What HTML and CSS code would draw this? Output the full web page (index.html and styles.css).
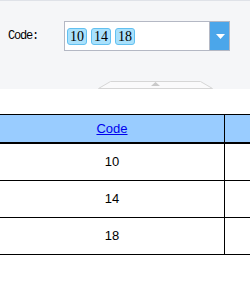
FILE: index.html
```html
<!DOCTYPE html>
<html>
<head>
<meta charset="utf-8">
<link rel="stylesheet" href="styles.css">
</head>
<body>
<div class="page">
  <div class="filter">
    <div class="filter-row">
      <span class="label">Code:</span>
      <div class="select">
        <div class="field">
          <span class="tag">10</span>
          <span class="tag">14</span>
          <span class="tag">18</span>
        </div>
        <div class="drop">
          <svg width="9" height="5" viewBox="0 0 9 5"><polygon points="0,0 9,0 4.5,5" fill="#ffffff"/></svg>
        </div>
      </div>
    </div>
    <div class="tab">
      <svg width="116" height="8" viewBox="0 0 116 8">
        <polygon points="0.5,7.5 12.5,0.5 102.5,0.5 114.5,7.5" fill="#fafafb" stroke="#d6d6d6" stroke-width="1"/>
        <polygon points="53,5 57.5,1 62,5" fill="#cacaca"/>
      </svg>
    </div>
  </div>
  <table class="grid">
    <colgroup><col class="c1"><col class="c2"></colgroup>
    <thead>
      <tr><th class="first"><a href="#">Code</a></th><th></th></tr>
    </thead>
    <tbody>
      <tr><td class="first">10</td><td></td></tr>
      <tr><td class="first">14</td><td></td></tr>
      <tr><td class="first">18</td><td></td></tr>
    </tbody>
  </table>
</div>
</body>
</html>
```
FILE: styles.css
```css
html, body {
  margin: 0;
  padding: 0;
  background: #ffffff;
  overflow: hidden;
}
.page {
  width: 250px;
  height: 286px;
  overflow: hidden;
}
.filter {
  box-sizing: border-box;
  height: 89px;
  border-top: 1px solid #dfe2e8;
  background: #f5f6f8;
  display: flex;
  flex-direction: column;
}
.filter-row {
  display: flex;
  align-items: center;
  margin-top: 20px;
  padding-left: 8px;
}
.label {
  font-family: "Liberation Mono", monospace;
  font-size: 12px;
  letter-spacing: -1.2px;
  color: #000;
  width: 56px;
}
.select {
  box-sizing: border-box;
  width: 166px;
  height: 30px;
  border: 1px solid #b4b8c4;
  display: flex;
  background: #fff;
}
.field {
  flex: 1;
  display: flex;
  align-items: center;
  gap: 4px;
  padding-left: 2px;
}
.tag {
  box-sizing: border-box;
  height: 17px;
  width: 20px;
  border: 1px solid #62c0f0;
  background: #a9e1fc;
  border-radius: 3px;
  font-family: "Liberation Serif", serif;
  font-size: 14px;
  line-height: 15px;
  text-align: center;
  color: #000;
}
.drop {
  width: 19px;
  border-left: 1px solid #b4b8c4;
  background: #4ba6ea;
  display: flex;
  align-items: center;
  justify-content: center;
}
.drop svg {
  display: block;
  margin-left: 1px;
}
.tab {
  margin-top: auto;
  margin-left: 98px;
  height: 8px;
}
.tab svg {
  display: block;
}
.grid {
  margin-top: 25px;
  border-collapse: separate;
  border-spacing: 0;
  table-layout: fixed;
  width: 325px;
  font-family: "Liberation Sans", Arial, sans-serif;
  font-size: 13px;
}
.c1 { width: 225px; }
.c2 { width: 100px; }
.grid th {
  background: #99ccff;
  border-top: 1px solid #000;
  border-bottom: 2px solid #000;
  padding: 0;
  height: 27px;
  line-height: 27px;
  font-weight: normal;
  text-align: center;
}
.grid th a {
  color: #0000ee;
  text-decoration: underline;
}
.grid td {
  border-bottom: 1px solid #000;
  padding: 0;
  height: 36px;
  line-height: 36px;
  text-align: center;
  color: #000;
}
.grid .first {
  border-right: 1px solid #000;
}
```
